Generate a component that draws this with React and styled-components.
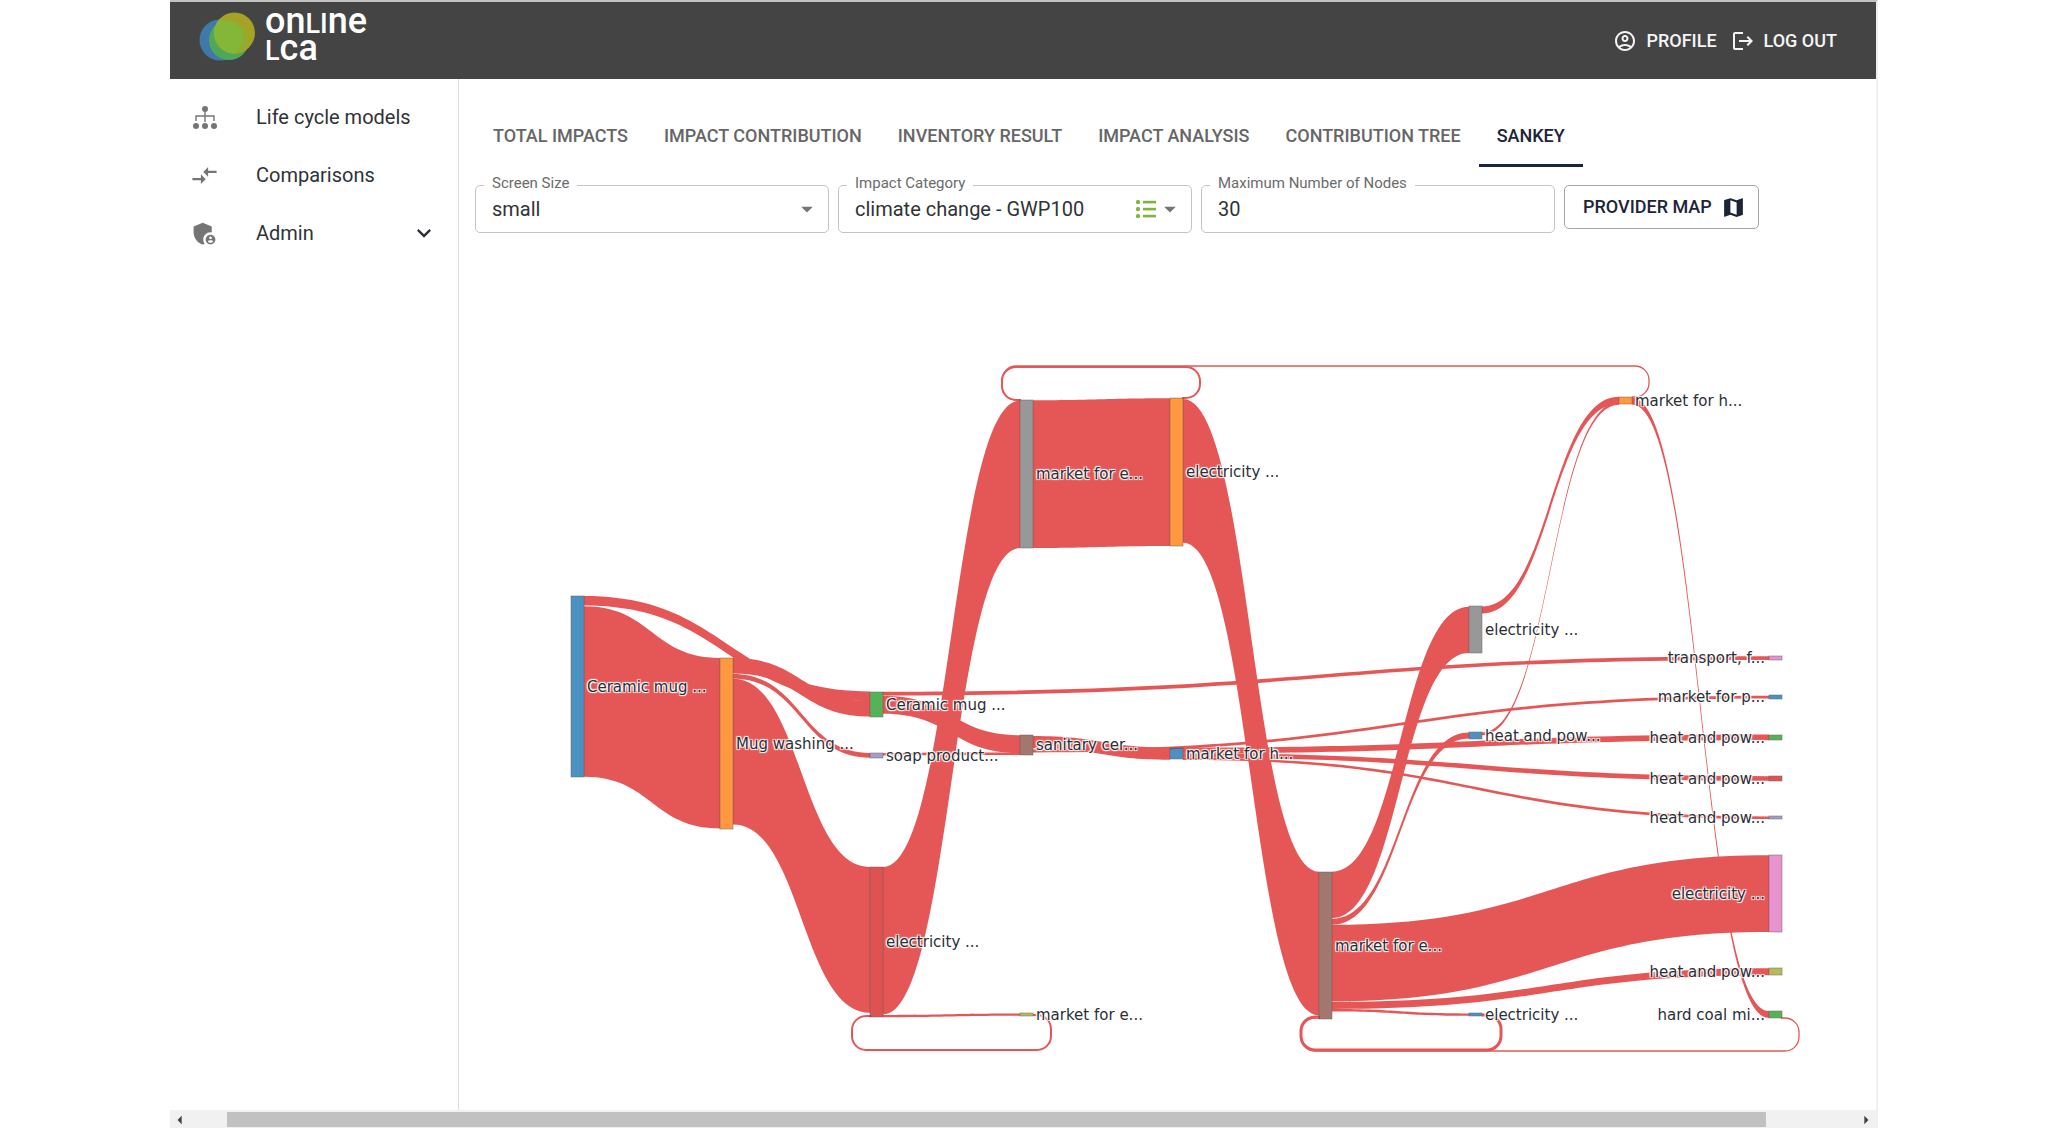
import React, { useState } from "react";
import styled, { createGlobalStyle } from "styled-components";
import {
  MdAdminPanelSettings,
  MdArrowDropDown,
  MdArrowLeft,
  MdArrowRight,
  MdCompareArrows,
  MdKeyboardArrowDown,
  MdLogout,
  MdMap,
  MdOutlineAccountCircle,
} from "react-icons/md";

const GlobalStyle = createGlobalStyle`
  * {
    box-sizing: border-box;
  }

  body {
    margin: 0;
    background: #fff;
    color: #303338;
    font-family: Roboto, sans-serif;
  }
`;

const Page = styled.div`
  display: flex;
  flex-direction: column;
  min-height: 100vh;
  margin: 0 170px;
  border-top: 2px solid #c2c2c2;
  border-right: 2px solid #efefef;
`;

const Header = styled.header`
  display: flex;
  align-items: center;
  justify-content: space-between;
  height: 77px;
  padding: 0 39px 0 28px;
  background: #444;
  color: #f5f5f5;
`;

const Logo = styled.a`
  display: flex;
  align-items: center;
  gap: 9px;
  height: 66px;
  margin-bottom: 11px;
  color: #fff;
  text-decoration: none;
`;

const LogoText = styled.span`
  font-size: 36px;
  font-weight: 500;
  line-height: 27px;
`;

const SmallCap = styled.span`
  font-size: 27px;
  line-height: 0;
`;

const HeaderNav = styled.nav`
  display: flex;
  gap: 14px;
`;

const HeaderButton = styled.button`
  display: flex;
  align-items: center;
  gap: 9px;
  padding: 0;
  border: none;
  background: transparent;
  color: inherit;
  font: 500 18px/24px Roboto, sans-serif;
  cursor: pointer;
`;

const Body = styled.div`
  display: flex;
  flex: 1;
`;

const Sidebar = styled.nav`
  width: 289px;
  padding-top: 9px;
  border-right: 1px solid #dcdcdc;
`;

const SidebarLink = styled.a`
  display: flex;
  align-items: center;
  height: 58px;
  padding: 0 20px;
  color: inherit;
  font-size: 20px;
  text-decoration: none;

  span {
    flex: 1;
    margin-left: 37px;
  }

  svg:first-child {
    color: #757575;
  }
`;

const Main = styled.main`
  flex: 1;
  min-width: 0;
  padding-top: 29px;
`;

const Tabs = styled.div`
  display: flex;
  padding-left: 16px;
`;

const Tab = styled.button`
  height: 59px;
  padding: 0 18px;
  border: none;
  border-bottom: 3px solid ${({ $active }) => ($active ? "#1c2438" : "transparent")};
  background: transparent;
  color: ${({ $active }) => ($active ? "#1c2438" : "#666")};
  font: 500 18px/24px Roboto, sans-serif;
  cursor: pointer;
`;

const Filters = styled.div`
  display: flex;
  align-items: flex-end;
  gap: 9px;
  padding: 8px 16px 0;
`;

const Field = styled.fieldset`
  display: flex;
  align-items: center;
  flex: 0 1 354px;
  min-width: 0;
  height: 58px;
  margin: 0;
  padding: 0 7px 10px 8px;
  border: 1px solid #c4c4c4;
  border-radius: 5px;
`;

const Legend = styled.legend`
  padding: 0 8px 4px;
  color: #6b6b6b;
  font-size: 15px;
  line-height: 16px;
`;

const FieldRow = styled.div`
  display: flex;
  align-items: center;
  width: 100%;
  height: 28px;

  svg {
    flex: none;
    color: #757575;
  }
`;

const Select = styled.select`
  flex: 1;
  min-width: 0;
  padding: 0 8px;
  border: none;
  appearance: none;
  background: transparent;
  color: #303338;
  font: 20px/28px Roboto, sans-serif;
`;

const Input = styled.input`
  width: 100%;
  padding: 0 8px;
  border: none;
  background: transparent;
  color: #303338;
  font: 20px/28px Roboto, sans-serif;
`;

const MapButton = styled.button`
  display: flex;
  align-items: center;
  align-self: flex-start;
  gap: 9px;
  height: 44px;
  margin-top: 10px;
  padding: 0 12px 0 18px;
  border: 1px solid #a6a6a6;
  border-radius: 5px;
  background: transparent;
  color: #1c2438;
  font: 500 18px/24px Roboto, sans-serif;
  cursor: pointer;
`;

const Chart = styled.svg`
  display: block;
  width: 100%;
  height: auto;
`;

const Flow = styled.path`
  fill: #e55757;
`;

const Loop = styled.path`
  fill: none;
  stroke: #e55757;
`;

const Node = styled.rect`
  opacity: 0.8;
  stroke: #444;
  stroke-opacity: 0.5;
  stroke-width: 1px;
`;

const NodeLabel = styled.text`
  fill: #2a2f36;
  font-family: "DejaVu Sans", Verdana, sans-serif;
  font-size: 15px;
  text-shadow: 1px 1px 1px #fff, -1px -1px 1px #fff, 1px -1px 1px #fff,
    -1px 1px 1px #fff;
`;

const ScrollBar = styled.div`
  display: flex;
  align-items: center;
  justify-content: space-between;
  height: 19px;
  background: #f1f1f1;
`;

const ScrollButton = styled.button`
  display: flex;
  align-items: center;
  justify-content: center;
  width: 20px;
  height: 19px;
  padding: 0;
  border: none;
  background: transparent;
  color: #444;
`;

const ScrollTrack = styled.div`
  flex: 1;
  padding: 0 90px 0 37px;
`;

const ScrollThumb = styled.div`
  height: 15px;
  background: #c1c1c1;
`;

const TABS = [
  "TOTAL IMPACTS",
  "IMPACT CONTRIBUTION",
  "INVENTORY RESULT",
  "IMPACT ANALYSIS",
  "CONTRIBUTION TREE",
  "SANKEY",
];

const BLUE = "#1f77b4";
const ORANGE = "#ff7f0e";
const GREEN = "#2ca02c";
const RED = "#d62728";
const PURPLE = "#9481bd";
const BROWN = "#8c564b";
const PINK = "#e377c2";
const GREY = "#7f7f7f";
const OLIVE = "#a8a82e";

const NODE_WIDTH = 13;
const columnX = (col) => 571 + Math.floor(col * 149.75);

// col, top, bottom, color, label
const NODES = [
  [0, 595, 776, BLUE, "Ceramic mug ..."],
  [1, 657, 828, ORANGE, "Mug washing ..."],
  [2, 691, 716, GREEN, "Ceramic mug ..."],
  [2, 752, 757, PURPLE, "soap product..."],
  [2, 866, 1016, RED, "electricity ..."],
  [3, 399, 547, GREY, "market for e..."],
  [3, 734, 754, BROWN, "sanitary cer..."],
  [3, 1012, 1015, OLIVE, "market for e..."],
  [4, 397, 545, ORANGE, "electricity ..."],
  [4, 747, 758, BLUE, "market for h..."],
  [5, 871, 1018, BROWN, "market for e..."],
  [6, 605, 652, GREY, "electricity ..."],
  [6, 731, 738, BLUE, "heat and pow..."],
  [6, 1012, 1015, BLUE, "electricity ..."],
  [7, 396, 403, ORANGE, "market for h..."],
  [8, 655, 659, PINK, "transport, f..."],
  [8, 694, 698, BLUE, "market for p..."],
  [8, 734, 739, GREEN, "heat and pow..."],
  [8, 775, 780, RED, "heat and pow..."],
  [8, 815, 818, PURPLE, "heat and pow..."],
  [8, 854, 931, PINK, "electricity ..."],
  [8, 967, 974, OLIVE, "heat and pow..."],
  [8, 1010, 1017, GREEN, "hard coal mi..."],
];

// source col, target col, source top, target top, thickness
const FLOWS = [
  [0, 1, 605.3, 657, 170.4],
  [0, 2, 595, 690.5, 9.6],
  [1, 2, 657, 700, 15.5],
  [1, 2, 673, 752, 4.8],
  [1, 2, 677.7, 866, 145.7],
  [2, 3, 866, 399.5, 147.5],
  [2, 3, 1014, 1012.6, 2.2],
  [2, 8, 690.8, 655.3, 3.6],
  [2, 3, 694.8, 734.2, 18],
  [2, 3, 752, 751.6, 2.4],
  [3, 4, 399.3, 397.3, 147.7],
  [3, 4, 735, 746.5, 12.3],
  [3, 8, 748.6, 694.8, 2.8],
  [4, 5, 398, 870.7, 143.7],
  [4, 8, 746.6, 733.4, 5.8],
  [4, 8, 752.2, 775.2, 4.6],
  [4, 8, 756.4, 815.5, 2.6],
  [5, 6, 870.7, 605.7, 46.4],
  [5, 6, 917.8, 731.5, 6],
  [5, 8, 923.7, 854.2, 76.7],
  [5, 8, 1001, 967.2, 7],
  [5, 6, 1008, 1012.4, 2.4],
  [6, 7, 605.5, 395.7, 7],
  [6, 7, 731.4, 401, 2.8],
  [7, 8, 396.6, 1010, 7],
];

// flows that run back to an earlier column, drawn as rounded loops
const LOOPS = [
  { left: 1002, right: 1200, y: 366, inX: 1021, inY: 399, outX: 1182, outY: 397, size: 2 },
  { left: 1002, right: 1649, y: 365, inX: 1021, inY: 399, outX: 1632, outY: 396, size: 1.3 },
  { left: 852, right: 1051, y: 1049, inX: 871, inY: 1015, outX: 1033, outY: 1014, size: 2 },
  { left: 1301, right: 1501, y: 1049, inX: 1320, inY: 1016, outX: 1482, outY: 1014, size: 3 },
  { left: 1301, right: 1799, y: 1050, inX: 1320, inY: 1017, outX: 1781, outY: 1017, size: 1.3 },
];

function flowPath([from, to, y0, y1, size]) {
  const x0 = columnX(from) + NODE_WIDTH;
  const x1 = columnX(to);
  const mid = (x0 + x1) / 2;
  return `M${x0},${y0}C${mid},${y0} ${mid},${y1} ${x1},${y1}V${y1 + size}C${mid},${y1 + size} ${mid},${y0 + size} ${x0},${y0 + size}Z`;
}

function loopPath({ left, right, y, inX, inY, outX, outY }) {
  const r = 14;
  const dir = y > outY ? 1 : -1;
  const sweep = dir > 0 ? 1 : 0;
  return `M${outX},${outY}H${right - r}A${r},${r} 0 0 ${sweep} ${right},${outY + dir * r}V${y - dir * r}A${r},${r} 0 0 ${sweep} ${right - r},${y}H${left + r}A${r},${r} 0 0 ${sweep} ${left},${y - dir * r}V${inY + dir * r}A${r},${r} 0 0 ${sweep} ${left + r},${inY}H${inX}`;
}

function Sankey() {
  return (
    <Chart viewBox="459 232 1417 877" role="img" aria-label="Sankey diagram">
      {LOOPS.map((loop, i) => (
        <Loop key={i} d={loopPath(loop)} strokeWidth={loop.size} />
      ))}
      {FLOWS.map((flow, i) => (
        <Flow key={i} d={flowPath(flow)} />
      ))}
      {NODES.map(([col, top, bottom, color], i) => (
        <Node
          key={i}
          x={columnX(col)}
          y={top}
          width={NODE_WIDTH}
          height={bottom - top}
          fill={color}
        />
      ))}
      {NODES.map(([col, top, bottom, , label], i) => (
        <NodeLabel
          key={i}
          x={col === 8 ? columnX(col) - 4 : columnX(col) + NODE_WIDTH + 3}
          y={Math.round((top + bottom) / 2) + 5}
          textAnchor={col === 8 ? "end" : "start"}
        >
          {label}
        </NodeLabel>
      ))}
    </Chart>
  );
}

function LogoMark() {
  return (
    <svg width="58" height="54" viewBox="0 0 58 54" aria-hidden="true">
      <defs>
        <clipPath id="yellow-circle">
          <circle cx="36.5" cy="25" r="20.5" />
        </clipPath>
      </defs>
      <circle cx="22" cy="32" r="20.5" fill="#4079a8" />
      <circle cx="31" cy="32" r="20" fill="#4fa75c" />
      <circle cx="36.5" cy="25" r="20.5" fill="#a5a224" />
      <g clipPath="url(#yellow-circle)">
        <circle cx="31" cy="32" r="20" fill="#94ab2d" />
        <circle cx="22" cy="32" r="20.5" fill="#84b738" />
        <circle cx="29" cy="29" r="16" fill="#84b738" />
      </g>
    </svg>
  );
}

function ModelsIcon() {
  return (
    <svg width="29" height="29" viewBox="0 0 29 29" fill="currentColor" aria-hidden="true">
      <circle cx="15" cy="6" r="3" />
      <circle cx="6" cy="23" r="3" />
      <circle cx="15" cy="23" r="3" />
      <circle cx="24" cy="23" r="3" />
      <path d="M15 7v12M6 18v-5h18v5" fill="none" stroke="currentColor" strokeWidth="1.4" />
    </svg>
  );
}

function ListIcon() {
  return (
    <svg width="20" height="20" viewBox="0 0 20 20" fill="#7fb53a" aria-hidden="true">
      <rect x="0" y="1" width="4" height="4" rx="1.5" />
      <rect x="0" y="8" width="4" height="4" rx="1.5" />
      <rect x="0" y="15" width="4" height="4" rx="1.5" />
      <rect x="7" y="1.8" width="13" height="2.6" />
      <rect x="7" y="8.8" width="13" height="2.6" />
      <rect x="7" y="15.8" width="13" height="2.6" />
    </svg>
  );
}

function App() {
  const [tab, setTab] = useState("SANKEY");
  const [maxNodes, setMaxNodes] = useState("30");

  return (
    <>
      <GlobalStyle />
      <Page>
        <Header>
          <Logo href="#" aria-label="onLIne Lca">
            <LogoMark />
            <LogoText>
              on<SmallCap>LI</SmallCap>ne
              <br />
              <SmallCap>L</SmallCap>ca
            </LogoText>
          </Logo>
          <HeaderNav>
            <HeaderButton>
              <MdOutlineAccountCircle size={24} />
              PROFILE
            </HeaderButton>
            <HeaderButton>
              <MdLogout size={24} />
              LOG OUT
            </HeaderButton>
          </HeaderNav>
        </Header>
        <Body>
          <Sidebar>
            <SidebarLink href="#">
              <ModelsIcon />
              <span>Life cycle models</span>
            </SidebarLink>
            <SidebarLink href="#">
              <MdCompareArrows size={29} />
              <span>Comparisons</span>
            </SidebarLink>
            <SidebarLink href="#">
              <MdAdminPanelSettings size={29} />
              <span>Admin</span>
              <MdKeyboardArrowDown size={28} />
            </SidebarLink>
          </Sidebar>
          <Main>
            <Tabs role="tablist">
              {TABS.map((name) => (
                <Tab
                  key={name}
                  role="tab"
                  aria-selected={tab === name}
                  $active={tab === name}
                  onClick={() => setTab(name)}
                >
                  {name}
                </Tab>
              ))}
            </Tabs>
            <Filters>
              <Field>
                <Legend>
                  <label htmlFor="screen-size">Screen Size</label>
                </Legend>
                <FieldRow>
                  <Select id="screen-size">
                    <option>small</option>
                  </Select>
                  <MdArrowDropDown size={28} />
                </FieldRow>
              </Field>
              <Field>
                <Legend>
                  <label htmlFor="impact-category">Impact Category</label>
                </Legend>
                <FieldRow>
                  <Select id="impact-category">
                    <option>climate change - GWP100</option>
                  </Select>
                  <ListIcon />
                  <MdArrowDropDown size={28} />
                </FieldRow>
              </Field>
              <Field>
                <Legend>
                  <label htmlFor="max-nodes">Maximum Number of Nodes</label>
                </Legend>
                <FieldRow>
                  <Input
                    id="max-nodes"
                    value={maxNodes}
                    onChange={(e) => setMaxNodes(e.target.value)}
                  />
                </FieldRow>
              </Field>
              <MapButton>
                PROVIDER MAP
                <MdMap size={25} />
              </MapButton>
            </Filters>
            <Sankey />
          </Main>
        </Body>
        <ScrollBar>
          <ScrollButton aria-label="Scroll left">
            <MdArrowLeft size={20} />
          </ScrollButton>
          <ScrollTrack>
            <ScrollThumb />
          </ScrollTrack>
          <ScrollButton aria-label="Scroll right">
            <MdArrowRight size={20} />
          </ScrollButton>
        </ScrollBar>
      </Page>
    </>
  );
}

export default App;
